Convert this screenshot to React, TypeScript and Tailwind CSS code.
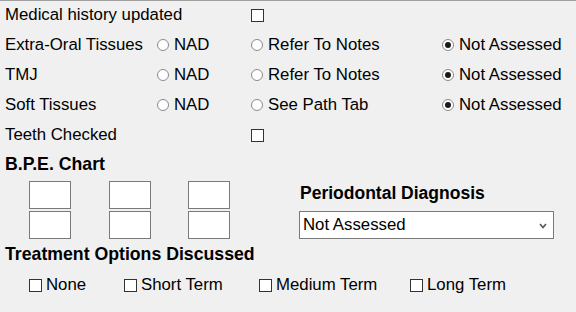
import React from 'react';

function CheckBox() {
  return <span className="block h-[13px] w-[13px] shrink-0 border border-[#333333] bg-white" />;
}

function Radio({ label, checked = false }: { label: string; checked?: boolean }) {
  return (
    <span className="flex items-center gap-[5px]">
      <span className="flex h-[12px] w-[12px] shrink-0 items-center justify-center rounded-full border border-[#8a8a8a] bg-white">
        {checked && <span className="block h-[6px] w-[6px] rounded-full bg-[#1a1a1a]" />}
      </span>
      <span>{label}</span>
    </span>
  );
}

function LabeledCheck({ label, width }: { label: string; width: string }) {
  return (
    <span className={`flex items-center gap-[4px] ${width}`}>
      <CheckBox />
      <span>{label}</span>
    </span>
  );
}

const assessments = [
  { label: 'Extra-Oral Tissues', second: 'Refer To Notes' },
  { label: 'TMJ', second: 'Refer To Notes' },
  { label: 'Soft Tissues', second: 'See Path Tab' },
];

function BpeBox() {
  return <div className="h-[28px] w-[42px] border border-[#7a7a7a] bg-white" />;
}

export default function App() {
  return (
    <div className="h-[312px] w-[576px] overflow-hidden border-t border-[#a0a0a0] bg-[#f0f0f0] pl-[5px] font-['Liberation_Sans',Arial,sans-serif] text-[16.8px] leading-none text-black">
      <div className="flex h-[29px] items-center">
        <span className="w-[246px]">Medical history updated</span>
        <CheckBox />
      </div>

      {assessments.map((row) => (
        <div key={row.label} className="flex h-[30px] items-center">
          <span className="w-[152px]">{row.label}</span>
          <span className="w-[94px]">
            <Radio label="NAD" />
          </span>
          <span className="w-[191px]">
            <Radio label={row.second} />
          </span>
          <Radio label="Not Assessed" checked />
        </div>
      ))}

      <div className="flex h-[30px] items-center">
        <span className="w-[246px]">Teeth Checked</span>
        <CheckBox />
      </div>

      <div className="flex h-[30px] items-center text-[17.7px] font-bold">B.P.E. Chart</div>

      <div className="mt-[1px] flex">
        <div className="ml-[24px] flex gap-[38px]">
          {[0, 1, 2].map((col) => (
            <div key={col} className={`flex flex-col gap-[2px] ${col === 2 ? '-ml-[1px]' : ''}`}>
              <BpeBox />
              <BpeBox />
            </div>
          ))}
        </div>
        <div className="ml-[69px] flex flex-col">
          <div className="flex h-[26px] items-center pl-[1px] text-[17.5px] font-bold">Periodontal Diagnosis</div>
          <div className="mt-[4px] flex h-[28px] w-[255px] items-center justify-between border border-[#7a7a7a] bg-white pl-[3px] pr-[6px]">
            <span>Not Assessed</span>
            <svg width="8" height="6" viewBox="0 0 8 6" className="mt-[2px]">
              <polyline points="1,1 4,4.5 7,1" fill="none" stroke="#555555" strokeWidth="1.6" />
            </svg>
          </div>
        </div>
      </div>

      <div className="flex h-[31px] items-center text-[17.7px] font-bold">Treatment Options Discussed</div>

      <div className="flex h-[31px] items-center pl-[24px]">
        <LabeledCheck label="None" width="w-[95px]" />
        <LabeledCheck label="Short Term" width="w-[135px]" />
        <LabeledCheck label="Medium Term" width="w-[151px]" />
        <LabeledCheck label="Long Term" width="" />
      </div>
    </div>
  );
}
